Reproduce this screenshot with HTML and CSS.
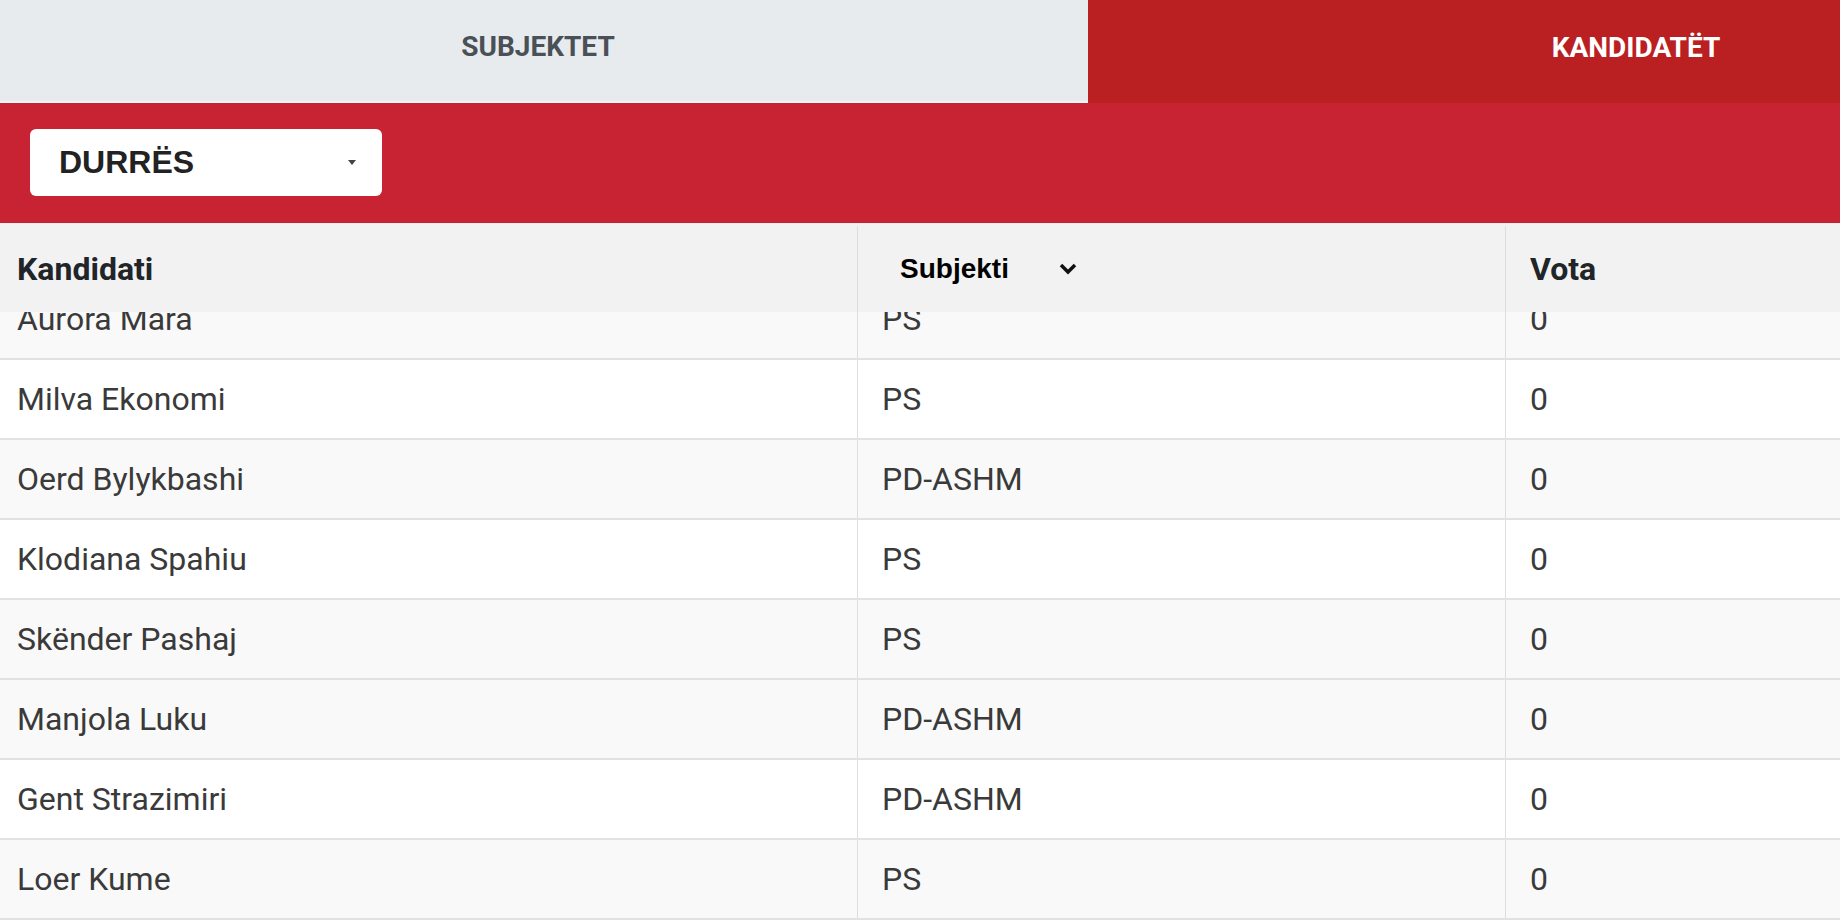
FILE: index.html
```html
<!DOCTYPE html>
<html lang="sq">
<head>
    <meta charset="UTF-8">
    <meta name="viewport" content="width=device-width, initial-scale=1.0">
    <title>Kandidatët</title>
    <link rel="stylesheet" href="styles.css">
</head>
<body>
<div class="page">
    <div class="tabs">
        <a class="tab tab-off" href="#">SUBJEKTET</a>
        <a class="tab tab-on" href="#">KANDIDATËT</a>
    </div>
    <div class="filter">
        <div class="select"><span>DURRËS</span><i class="caret"></i></div>
    </div>
    <div class="results">
        <div class="head">
            <div class="cell">Kandidati</div>
            <div class="cell cell-party">
                <span class="party-select">Subjekti
                    <svg class="chev" width="18" height="12" viewBox="0 0 18 12"><polyline points="2,2 9,9 16,2" fill="none" stroke="#111" stroke-width="3.5"/></svg>
                </span>
            </div>
            <div class="cell">Vota</div>
        </div>
        <div class="rows">
            <div class="row odd"><div class="cell">Aurora Mara</div><div class="cell">PS</div><div class="cell">0</div></div>
            <div class="row"><div class="cell">Milva Ekonomi</div><div class="cell">PS</div><div class="cell">0</div></div>
            <div class="row odd"><div class="cell">Oerd Bylykbashi</div><div class="cell">PD-ASHM</div><div class="cell">0</div></div>
            <div class="row"><div class="cell">Klodiana Spahiu</div><div class="cell">PS</div><div class="cell">0</div></div>
            <div class="row odd"><div class="cell">Skënder Pashaj</div><div class="cell">PS</div><div class="cell">0</div></div>
            <div class="row odd"><div class="cell">Manjola Luku</div><div class="cell">PD-ASHM</div><div class="cell">0</div></div>
            <div class="row"><div class="cell">Gent Strazimiri</div><div class="cell">PD-ASHM</div><div class="cell">0</div></div>
            <div class="row odd"><div class="cell">Loer Kume</div><div class="cell">PS</div><div class="cell">0</div></div>
        </div>
    </div>
</div>
</body>
</html>
```

FILE: styles.css
```css
html,body{
    margin: 0;padding: 0;
    overflow: hidden;
}
body{
    font-family: Roboto, "Liberation Sans", sans-serif;
    color: #333;
    background: #fff;
}
.page{
    width: 2176px;
}
.tabs{
    display: flex;
    height: 103px;
}
.tab{
    flex: none;
    width: 1088px;
    display: flex;
    align-items: center;
    justify-content: center;
    box-sizing: border-box;
    padding-bottom: 8px;
    font-size: 28px;
    font-weight: 700;
    text-decoration: none;
}
.tab-off{
    padding-right: 12px;
    background: #e8ebee;
    color: #4a5057;
    border-bottom: 2px solid #eef6fa;
}
.tab-on{
    padding-left: 8px;
    background: #ba1f22;
    color: #fff;
}
.filter{
    background: #c82333;
    padding: 26px 30px 27px;
}
.select{
    width: 352px;
    height: 67px;
    box-sizing: border-box;
    padding: 0 26px 0 29px;
    display: flex;
    align-items: center;
    justify-content: space-between;
    background: #fff;
    border-radius: 6px;
    font-family: "Liberation Sans", Arial, sans-serif;
    font-size: 32px;
    font-weight: 700;
    color: #222;
}
.caret{
    width: 0;height: 0;
    border-left: 4px solid transparent;
    border-right: 4px solid transparent;
    border-top: 5px solid #444;
}
.head,.row{
    display: grid;
    grid-template-columns: 858px 648px 1fr;
}
.head{
    position: relative;
    z-index: 1;
    height: 89px;
    padding-top: 2px;
    background: #f2f2f2;
    border-top: 1px solid #e9eef0;
    box-sizing: border-box;
    font-size: 32px;
    font-weight: 700;
    color: #212529;
}
.cell{
    display: flex;
    align-items: center;
    padding-left: 24px;
    border-right: 1px solid #dedede;
}
.cell:first-child{
    padding-left: 17px;
}
.cell-party{
    padding-left: 42px;
}
.party-select{
    display: flex;
    align-items: center;
    gap: 50px;
    font-family: "Liberation Sans", Arial, sans-serif;
    font-size: 28px;
    color: #000;
}
.rows{
    margin-top: -32px;
}
.row{
    height: 80px;
    box-sizing: border-box;
    border-bottom: 2px solid #e2e2e2;
    font-size: 32px;
    color: #3a3a3a;
}
.odd{
    background: #f9f9f9;
}
```
